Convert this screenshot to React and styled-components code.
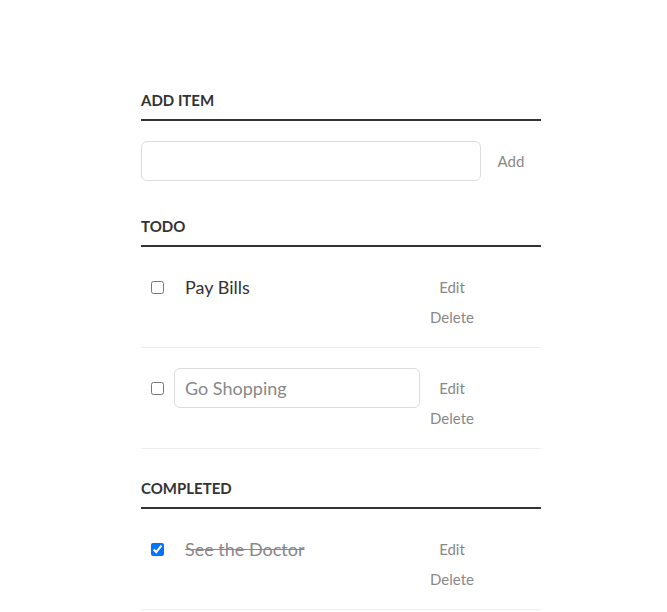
import React from "react";
import styled, { createGlobalStyle } from "styled-components";

const Global = createGlobalStyle`
  html, body { margin: 0; padding: 0; background: #fff; }
  body { color: #333; font-family: Lato, "Liberation Sans", sans-serif; }
  * { box-sizing: border-box; }
`;

const Container = styled.div`
  width: 400px;
  margin: 0 0 0 141px;
  padding-top: 61px;
`;

const Heading = styled.h3`
  display: block;
  margin: ${(p) => p.$mt || 0}px 0 ${(p) => p.$mb || 0}px;
  padding: 30px 0 10px;
  border-bottom: 2px solid #333;
  color: #333;
  font-size: 15px;
  line-height: 18px;
  font-weight: 700;
  text-transform: uppercase;
`;

const AddRow = styled.div`
  display: flex;
  align-items: center;
`;

const TextInput = styled.input`
  margin: 0;
  width: ${(p) => p.$w}px;
  height: 40px;
  font-size: 18px;
  line-height: 18px;
  padding: 10px;
  border: 1px solid #ddd;
  background: #fff;
  border-radius: 6px;
  font-family: Lato, "Liberation Sans", sans-serif;
  color: #888;
  outline: none;
`;

const Button = styled.button`
  background: none;
  border: 0;
  padding: 0;
  color: #888;
  font-size: 15px;
  line-height: 20px;
  height: 20px;
  width: 60px;
  margin: ${(p) => p.$mt ?? 10}px 0 0;
  font-family: Lato, "Liberation Sans", sans-serif;
  cursor: pointer;
  text-align: center;
`;

const List = styled.ul`
  margin: 0;
  padding: 0;
  list-style: none;
`;

const Item = styled.li`
  display: flex;
  align-items: flex-start;
  padding: 20px 0;
  border-bottom: 1px solid #eee;
`;

const CheckCell = styled.div`
  width: 33px;
  height: 40px;
  display: flex;
  align-items: center;
  justify-content: center;
  flex: none;
`;

const Check = styled.input`
  margin: 0;
  width: 13px;
  height: 13px;
`;

const Main = styled.div`
  width: 248px;
  flex: none;
`;

const Label = styled.label`
  display: block;
  font-size: 18px;
  line-height: 40px;
  padding: 0 0 0 11px;
  color: ${(p) => (p.$done ? "#888" : "#333")};
  text-decoration: ${(p) => (p.$done ? "line-through" : "none")};
`;

const Actions = styled.div`
  display: flex;
  flex-direction: column;
  width: 60px;
`;

function Task({ text, done, editing }) {
  return (
    <Item>
      <CheckCell>
        <Check type="checkbox" defaultChecked={done} />
      </CheckCell>
      <Main>
        {editing ? (
          <TextInput type="text" $w={246} defaultValue={text} />
        ) : (
          <Label $done={done}>{text}</Label>
        )}
      </Main>
      <Actions>
        <Button>Edit</Button>
        <Button>Delete</Button>
      </Actions>
    </Item>
  );
}

export default function App() {
  return (
    <>
      <Global />
      <Container>
        <Heading as="label" $mb={20}>
          Add Item
        </Heading>
        <AddRow>
          <TextInput type="text" $w={340} />
          <Button $mt={0}>Add</Button>
        </AddRow>
        <Heading $mt={6}>Todo</Heading>
        <List>
          <Task text="Pay Bills" />
          <Task text="Go Shopping" editing />
        </List>
        <Heading>Completed</Heading>
        <List>
          <Task text="See the Doctor" done />
        </List>
      </Container>
    </>
  );
}
